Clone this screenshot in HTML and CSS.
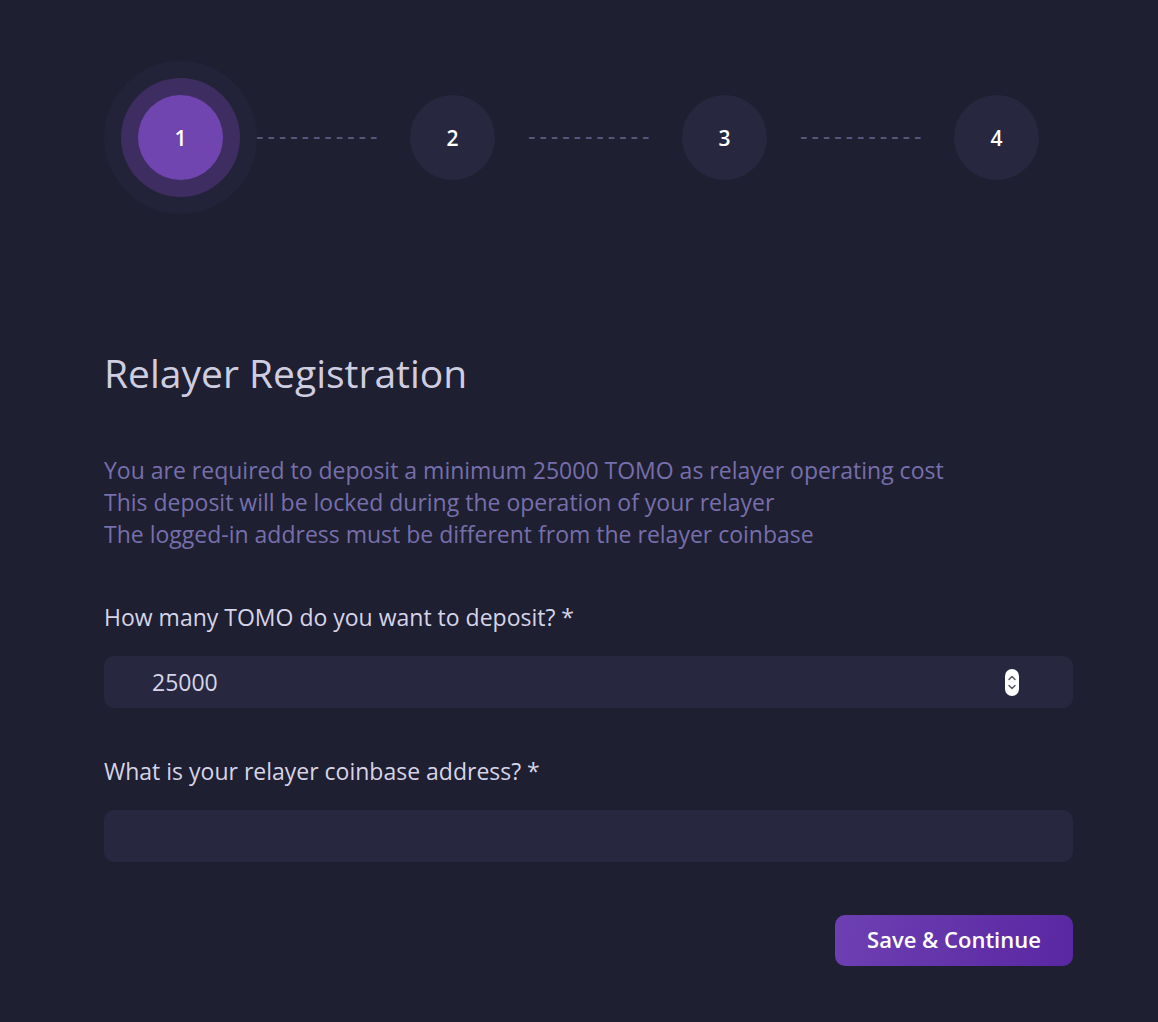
FILE: index.html
```html
<!DOCTYPE html>
<html lang="en">
<head>
<meta charset="utf-8">
<title>Relayer Registration</title>
<link rel="stylesheet" href="styles.css">
</head>
<body>
<main class="page">
  <div class="steps">
    <div class="step step-active">1</div>
    <div class="step-line"></div>
    <div class="step">2</div>
    <div class="step-line"></div>
    <div class="step">3</div>
    <div class="step-line"></div>
    <div class="step">4</div>
  </div>

  <h1 class="title">Relayer Registration</h1>

  <div class="notes">
    <p>You are required to deposit a minimum 25000 TOMO as relayer operating cost</p>
    <p>This deposit will be locked during the operation of your relayer</p>
    <p>The logged-in address must be different from the relayer coinbase</p>
  </div>

  <form class="form">
    <label class="label label-first" for="deposit">How many TOMO do you want to deposit? *</label>
    <div class="field field-number">
      <input id="deposit" class="input" type="text" value="25000">
      <svg class="spinner" width="14" height="27" viewBox="0 0 14 27" aria-hidden="true">
        <rect x="0" y="0" width="14" height="27" rx="7" fill="#ffffff"/>
        <path d="M4 10.5 L7 7.5 L10 10.5" fill="none" stroke="#5b5b66" stroke-width="1.5" stroke-linecap="round" stroke-linejoin="round"/>
        <path d="M4 16.5 L7 19.5 L10 16.5" fill="none" stroke="#5b5b66" stroke-width="1.5" stroke-linecap="round" stroke-linejoin="round"/>
      </svg>
    </div>

    <label class="label" for="coinbase">What is your relayer coinbase address? *</label>
    <div class="field">
      <input id="coinbase" class="input" type="text" value="">
    </div>

    <div class="actions">
      <button type="button" class="btn">Save &amp; Continue</button>
    </div>
  </form>
</main>
</body>
</html>
```

FILE: styles.css
```css
* {
  box-sizing: border-box;
}

html, body {
  margin: 0;
  padding: 0;
  background: #1e1f30;
}

body {
  font-family: "Open Sans", "Noto Sans", sans-serif;
  color: #d3d1e4;
  min-height: 1022px;
}

.page {
  width: 969px;
  margin-left: 104px;
  padding-top: 95px;
  padding-bottom: 56px;
}

.steps {
  display: flex;
  align-items: center;
  padding-left: 34px;
}

.step {
  width: 85px;
  height: 85px;
  border-radius: 50%;
  background: #272840;
  color: #ffffff;
  display: flex;
  align-items: center;
  justify-content: center;
  font-size: 21px;
  font-weight: 600;
  flex: none;
}

.step-active {
  background: #7045b0;
  box-shadow: 0 0 0 17px #3d2d60, 0 0 0 34px #222339;
}

.step-line {
  width: 120px;
  height: 2px;
  margin: 0 33.5px;
  background-image: linear-gradient(to right, #55567a 0 5.4px, transparent 5.4px 11.4px);
  background-size: 11.4px 2px;
  background-repeat: repeat-x;
  flex: none;
}

.title {
  margin: 168.5px 0 0;
  font-size: 39px;
  line-height: 48px;
  font-weight: 400;
  color: #cfcde0;
}

.notes {
  margin-top: 57.5px;
  color: #776fac;
  font-size: 23px;
  line-height: 32px;
}

.notes p {
  margin: 0;
}

.form {
  display: flex;
  flex-direction: column;
  margin-top: 51px;
}

.label {
  display: block;
  font-size: 23px;
  line-height: 32px;
  color: #d6d4e8;
  margin-top: 47px;
}

.label-first {
  margin-top: 0;
}

.field {
  margin-top: 23px;
  height: 52px;
  border-radius: 10px;
  background: #272840;
  display: flex;
  align-items: center;
  padding: 0 54px 0 48px;
}

.input {
  flex: 1;
  min-width: 0;
  border: 0;
  outline: none;
  background: transparent;
  color: #d6d4e8;
  font-family: inherit;
  font-size: 23px;
  padding: 0;
}

.spinner {
  flex: none;
  margin-top: 1px;
}

.actions {
  display: flex;
  justify-content: flex-end;
  margin-top: 53px;
}

.btn {
  width: 238px;
  height: 51px;
  border: 0;
  border-radius: 10px;
  padding: 0 0 3px;
  background: linear-gradient(100deg, #6d40b2 0%, #5a27a2 100%);
  color: #ffffff;
  font-family: inherit;
  font-size: 22px;
  font-weight: 600;
  cursor: pointer;
}
```
